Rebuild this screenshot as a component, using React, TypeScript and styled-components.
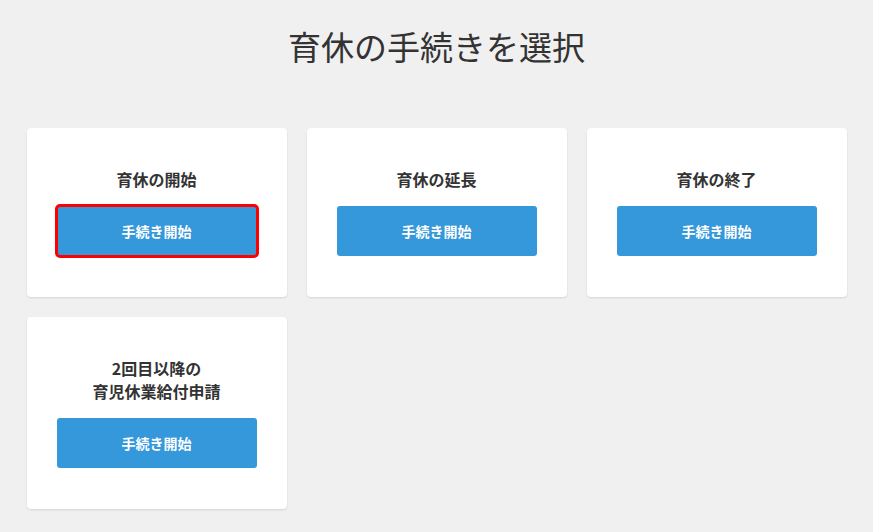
import styled, { createGlobalStyle } from "styled-components";

const GlobalStyle = createGlobalStyle`
  html, body {
    margin: 0;
    padding: 0;
    background-color: #f0f0f0;
    font-family: "Noto Sans CJK JP", "Noto Sans", sans-serif;
    color: #333;
  }
`;

type Procedure = {
  title: string[];
  focused?: boolean;
};

const procedures: Procedure[] = [
  { title: ["育休の開始"], focused: true },
  { title: ["育休の延長"] },
  { title: ["育休の終了"] },
  { title: ["2回目以降の", "育児休業給付申請"] },
];

export default function App() {
  return (
    <>
      <GlobalStyle />
      <Page>
        <Heading>育休の手続きを選択</Heading>
        <CardGrid>
          {procedures.map((p) => (
            <Card key={p.title.join("")}>
              <CardTitle>
                {p.title.map((line) => (
                  <span key={line}>{line}</span>
                ))}
              </CardTitle>
              <StartButton $focused={p.focused}>手続き開始</StartButton>
            </Card>
          ))}
        </CardGrid>
      </Page>
    </>
  );
}

const Page = styled("div")`
  padding: 22px 0 24px;
  display: flex;
  flex-direction: column;
  align-items: center;
`;

const Heading = styled("h1")`
  margin: 0;
  font-size: 33px;
  line-height: 48px;
  font-weight: 400;
  color: #333;
`;

const CardGrid = styled("div")`
  margin-top: 58px;
  display: grid;
  grid-template-columns: repeat(3, 260px);
  gap: 20px;
`;

const Card = styled("div")`
  background-color: #fff;
  border-radius: 4px;
  box-shadow: 0 1px 2px rgba(0, 0, 0, 0.12);
  padding: 40px 0 41px;
  display: flex;
  flex-direction: column;
  align-items: center;
`;

const CardTitle = styled("div")`
  font-size: 16px;
  font-weight: 700;
  line-height: 23px;
  text-align: center;
  display: flex;
  flex-direction: column;
`;

const StartButton = styled("button")<{ $focused?: boolean }>`
  margin-top: 15px;
  width: 200px;
  height: 50px;
  border: none;
  border-radius: 3px;
  background-color: #3598db;
  color: #fff;
  font-family: inherit;
  font-size: 14px;
  font-weight: 700;
  cursor: pointer;
  outline: ${(p) => (p.$focused ? "3px solid #ff0000" : "none")};
  outline-offset: -1px;
`;
